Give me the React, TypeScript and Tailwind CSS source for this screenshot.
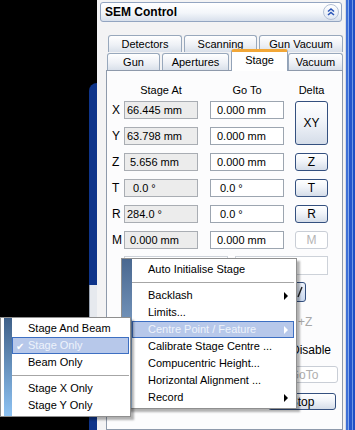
import React from "react";

type Row = { k: string; at: string; to: string; atPad: string; toPad: string };

const rows: Row[] = [
  { k: "X", at: "66.445 mm", to: "0.000 mm", atPad: "pl-[2px]", toPad: "pl-[6px]" },
  { k: "Y", at: "63.798 mm", to: "0.000 mm", atPad: "pl-[2px]", toPad: "pl-[6px]" },
  { k: "Z", at: "5.656 mm", to: "0.000 mm", atPad: "pl-[5px]", toPad: "pl-[6px]" },
  { k: "T", at: "0.0 °", to: "0.0 °", atPad: "pl-[8px]", toPad: "pl-[9px]" },
  { k: "R", at: "284.0 °", to: "0.0 °", atPad: "pl-[2px]", toPad: "pl-[9px]" },
  { k: "M", at: "0.000 mm", to: "0.000 mm", atPad: "pl-[5px]", toPad: "pl-[6px]" },
];

const xpBtn =
  "flex items-center justify-center rounded-[3px] border border-[#34507f] bg-[linear-gradient(to_bottom,#ffffff,#f1f4f9_45%,#d5dde9)] text-[12px] text-black";

function Tab({ label, w, active }: { label: string; w: string; active?: boolean }) {
  if (active) {
    return (
      <div
        className={`${w} flex h-[22px] items-center justify-center rounded-t-[3px] border border-b-0 border-[#93a3b8] border-t-[3px] border-t-[#f2a737] bg-white pb-[2px]`}
      >
        {label}
      </div>
    );
  }
  return (
    <div
      className={`${w} mb-px flex h-[17px] items-center justify-center rounded-t-[3px] border border-b-0 border-[#98a8bc] bg-[linear-gradient(to_bottom,#ffffff,#eef1f6_55%,#d9e0ea)]`}
    >
      {label}
    </div>
  );
}

function Arrow({ light }: { light?: boolean }) {
  return (
    <span
      className={`h-0 w-0 border-y-[4px] border-l-[4px] border-y-transparent ${
        light ? "border-l-white" : "border-l-black"
      }`}
    />
  );
}

function MenuItem({ label, arrow, hot }: { label: string; arrow?: boolean; hot?: boolean }) {
  return (
    <div
      className={`flex h-[17px] items-center justify-between border pl-[15px] pr-[5px] ${
        hot ? "border-[#3d6fc2] bg-[#b7c8ea] text-[#eef3fb]" : "border-transparent"
      }`}
    >
      <span>{label}</span>
      {arrow && <Arrow light={hot} />}
    </div>
  );
}

function SubItem({ label, hot }: { label: string; hot?: boolean }) {
  return (
    <div
      className={`relative flex h-[17px] items-center border pl-[15px] ${
        hot ? "border-[#3d6fc2] bg-[#b7c8ea] text-[#eef3fb]" : "border-transparent"
      }`}
    >
      {hot && <span className="absolute left-[3px] top-[1px] text-[10px] text-white">✔</span>}
      <span>{label}</span>
    </div>
  );
}

export default function App() {
  return (
    <div className="relative flex h-[430px] w-[355px] overflow-hidden bg-black font-['Liberation_Sans',Arial,sans-serif] text-[11px] text-black">
      {/* black desktop strip */}
      <div className="w-[89px] shrink-0" />

      {/* window edge behind */}
      <div className="flex w-[8px] shrink-0 flex-col">
        <div className="h-[83px]" />
        <div className="h-[202px] rounded-tl-[10px] bg-[#0e348a]" />
        <div className="h-[33px] border-l border-[#9aa4b2] bg-[#e6e9ee]" />
        <div className="flex-1 bg-[#0e348a]" />
      </div>

      {/* panel */}
      <div className="flex w-[248px] shrink-0 flex-col bg-[#f3f3f4] pl-[3px] pt-[2px]">
        <div className="flex h-[20px] w-[242px] items-center justify-between rounded-[3px] border border-[#93a5c1] bg-[linear-gradient(to_bottom,#ffffff,#f3f6fa_55%,#d8e0ec)] pl-[4px] pr-[2px]">
          <span className="text-[12px] font-bold text-black">SEM Control</span>
          <span className="flex h-[16px] w-[16px] items-center justify-center rounded-full border border-[#b3c0d6] bg-[linear-gradient(to_bottom,#ffffff,#dfe7f3)]">
            <svg width="10" height="10" viewBox="0 0 10 10" fill="none" stroke="#2a55b8" strokeWidth="1.6">
              <path d="M2 4.5 L5 2 L8 4.5" />
              <path d="M2 8 L5 5.5 L8 8" />
            </svg>
          </span>
        </div>

        {/* tabs */}
        <div className="ml-[6px] mt-[13px] flex w-[237px] flex-1 flex-col">
          <div className="flex h-[16px] gap-[2px] pl-[2px]">
            <Tab label="Detectors" w="w-[74px]" />
            <Tab label="Scanning" w="w-[73px]" />
            <Tab label="Gun Vacuum" w="w-[84px]" />
          </div>
          <div className="relative z-10 mt-[2px] -mb-px flex h-[18px] items-end pl-[1px]">
            <Tab label="Gun" w="w-[53px]" />
            <div className="w-[2px]" />
            <Tab label="Apertures" w="w-[67px]" />
            <div className="w-[2px]" />
            <Tab label="Stage" w="w-[57px]" active />
            <Tab label="Vacuum" w="w-[55px]" />
          </div>

          <div className="flex-1 border border-[#8e9aab] bg-[#fcfcfd] pl-[3px] pt-[12px]">
            <div className="flex h-[14px] items-center">
              <div className="w-[14px]" />
              <div className="w-[74px] text-center">Stage At</div>
              <div className="ml-[12px] w-[74px] text-center">Go To</div>
              <div className="ml-[11px] w-[33px] text-center">Delta</div>
            </div>

            <div className="mt-[4px] flex">
              <div className="flex flex-col gap-[8px]">
                {rows.map((r) => (
                  <div key={r.k} className="flex h-[18px] items-center">
                    <div className="w-[14px] pl-[2px] text-[12px]">{r.k}</div>
                    <div
                      className={`flex h-[18px] w-[74px] items-center border border-[#a9adb3] bg-[#ececec] ${r.atPad}`}
                    >
                      {r.at}
                    </div>
                    <div
                      className={`ml-[12px] flex h-[18px] w-[74px] items-center border border-[#9ca5b0] bg-white ${r.toPad}`}
                    >
                      {r.to}
                    </div>
                  </div>
                ))}
              </div>
              <div className="ml-[11px] flex w-[33px] flex-col gap-[8px]">
                <div className={`${xpBtn} h-[44px]`}>XY</div>
                <div className={`${xpBtn} h-[18px]`}>Z</div>
                <div className={`${xpBtn} h-[18px]`}>T</div>
                <div className={`${xpBtn} h-[18px]`}>R</div>
                <div className="flex h-[18px] items-center justify-center rounded-[3px] border border-[#c9ced6] bg-white text-[12px] text-[#b4b4b4]">
                  M
                </div>
              </div>
            </div>

            {/* lower controls (mostly behind the menu) */}
            <div className="mt-[7px] flex h-[19px]">
              <div className="ml-[14px] w-[104px] border border-[#cdd2d9] bg-white" />
              <div className="ml-[7px] w-[93px] border border-[#cdd2d9] bg-white" />
            </div>
            <div className="mt-[7px] flex h-[20px]">
              <div className="ml-[152px] flex w-[44px] items-center justify-end rounded-[3px] border border-[#34507f] bg-[linear-gradient(to_bottom,#eef3fb,#c9d8ee)] pr-[2px]">
                <svg width="6" height="12" viewBox="0 0 6 12" stroke="#222" strokeWidth="1.4">
                  <path d="M5 1 L1 11" />
                </svg>
              </div>
            </div>
            <div className="ml-[188px] mt-[13px] h-[14px] text-[12px] leading-[14px] text-[#a8a8a8]">+Z</div>
            <div className="ml-[181px] mt-[14px] h-[14px] text-[12px] leading-[14px]">Disable</div>
            <div className="ml-[160px] mt-[9px] flex h-[17px] w-[68px] items-center justify-center rounded-[3px] border border-[#c9ced6] bg-white text-[12px] text-[#b0b0b0]">
              GoTo
            </div>
            <div className={`${xpBtn} ml-[158px] mt-[10px] h-[17px] w-[68px]`}>Stop</div>
          </div>
        </div>
      </div>

      {/* right window frame */}
      <div className="w-[10px] shrink-0 bg-[linear-gradient(to_right,#d6dbe4_0,#d6dbe4_1px,#3d6fd6_1px,#3d6fd6_3px,#84a9ec_3px,#84a9ec_4px,#2456cc_4px,#2456cc_7px,#6f98e6_7px,#6f98e6_8px,#1f4fc4_8px)]" />

      {/* context menu */}
      <div className="absolute left-[121px] top-[258px] flex w-[176px] border border-[#8f8f8f] bg-white shadow-[3px_3px_2px_rgba(0,0,0,0.3)]">
        <div className="w-[10px] bg-[linear-gradient(to_bottom,#4a6890,#a9cdf2)]" />
        <div className="flex-1 py-[2px] pr-[2px]">
          <MenuItem label="Auto Initialise Stage" />
          <div className="flex h-[9px] items-center">
            <div className="h-px flex-1 bg-[#a6a6a6]" />
          </div>
          <MenuItem label="Backlash" arrow />
          <MenuItem label="Limits..." />
          <MenuItem label="Centre Point / Feature" arrow hot />
          <MenuItem label="Calibrate Stage Centre ..." />
          <MenuItem label="Compucentric Height..." />
          <MenuItem label="Horizontal Alignment ..." />
          <MenuItem label="Record" arrow />
        </div>
      </div>

      {/* submenu */}
      <div className="absolute left-0 top-[317px] flex w-[131px] border border-[#8f8f8f] bg-white pl-[3px] shadow-[3px_3px_2px_rgba(0,0,0,0.3)]">
        <div className="w-[8px] bg-[linear-gradient(to_bottom,#3f6088,#8ec3f3)]" />
        <div className="flex-1 py-[2px] pr-[1px]">
          <SubItem label="Stage And Beam" />
          <SubItem label="Stage Only" hot />
          <SubItem label="Beam Only" />
          <div className="flex h-[9px] items-center">
            <div className="h-px flex-1 bg-[#a6a6a6]" />
          </div>
          <SubItem label="Stage X Only" />
          <SubItem label="Stage Y Only" />
        </div>
      </div>
    </div>
  );
}
